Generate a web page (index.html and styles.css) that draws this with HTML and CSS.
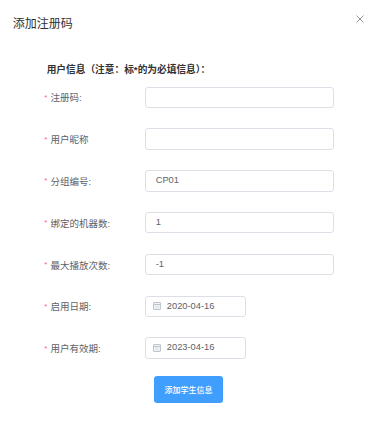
FILE: index.html
```html
<!DOCTYPE html>
<html lang="zh-CN">
<head>
<meta charset="utf-8">
<title>添加注册码</title>
<link rel="stylesheet" href="styles.css">
</head>
<body>
<div class="dialog">
  <div class="header">
    <span class="title">添加注册码</span>
    <button class="close" aria-label="关闭">
      <svg width="8" height="8" viewBox="0 0 8 8"><path d="M0.5 0.5 L7.5 7.5 M7.5 0.5 L0.5 7.5" stroke="#909399" stroke-width="1" fill="none"/></svg>
    </button>
  </div>
  <div class="form">
    <div class="section">用户信息（注意：标*的为必填信息）：</div>
    <div class="row">
      <label class="label"><span class="req">*</span>注册码:</label>
      <div class="input"></div>
    </div>
    <div class="row">
      <label class="label"><span class="req">*</span>用户昵称</label>
      <div class="input"></div>
    </div>
    <div class="row">
      <label class="label"><span class="req">*</span>分组编号:</label>
      <div class="input">CP01</div>
    </div>
    <div class="row">
      <label class="label"><span class="req">*</span>绑定的机器数:</label>
      <div class="input">1</div>
    </div>
    <div class="row">
      <label class="label"><span class="req">*</span>最大播放次数:</label>
      <div class="input">-1</div>
    </div>
    <div class="row">
      <label class="label"><span class="req">*</span>启用日期:</label>
      <div class="input date">
        <svg class="cal" width="8" height="8" viewBox="0 0 8 8"><rect x="0.5" y="0.5" width="7" height="7" rx="0.5" fill="#f2f3f5" stroke="#c0c4cc"/><path d="M0.5 2.5 H7.5" stroke="#c0c4cc"/><path d="M2 4.2 H6 M2 5.8 H6" stroke="#dcdfe6" stroke-width="0.8"/></svg>
        <span>2020-04-16</span>
      </div>
    </div>
    <div class="row">
      <label class="label"><span class="req">*</span>用户有效期:</label>
      <div class="input date">
        <svg class="cal" width="8" height="8" viewBox="0 0 8 8"><rect x="0.5" y="0.5" width="7" height="7" rx="0.5" fill="#f2f3f5" stroke="#c0c4cc"/><path d="M0.5 2.5 H7.5" stroke="#c0c4cc"/><path d="M2 4.2 H6 M2 5.8 H6" stroke="#dcdfe6" stroke-width="0.8"/></svg>
        <span>2023-04-16</span>
      </div>
    </div>
    <div class="actions">
      <button class="submit">添加学生信息</button>
    </div>
  </div>
</div>
</body>
</html>
```
FILE: styles.css
```css
html, body {
  margin: 0;
  padding: 0;
  background: #fff;
}
body {
  font-family: "Liberation Sans", "Noto Sans CJK SC", sans-serif;
  color: #606266;
  width: 378px;
  height: 422px;
  overflow: hidden;
}
.dialog {
  width: 378px;
}
.header {
  display: flex;
  justify-content: space-between;
  align-items: center;
  padding: 15.5px 14px 0 12.7px;
  height: 16px;
}
.title {
  font-size: 12px;
  line-height: 16px;
  color: #303133;
}
.close {
  border: 0;
  background: none;
  padding: 0;
  width: 8px;
  height: 8px;
  display: flex;
  margin-top: -9.5px;
}
.form {
  padding: 31.8px 0 0 44.3px;
}
.section {
  font-size: 9.7px;
  font-weight: bold;
  color: #303133;
  line-height: 14px;
  margin-left: 2.4px;
  margin-bottom: 9.4px;
}
.row {
  display: flex;
  align-items: center;
  height: 21.3px;
  margin-bottom: 20.5px;
}
.label {
  width: 101px;
  font-size: 9.5px;
  color: #606266;
  display: flex;
  align-items: center;
}
.req {
  color: #f56c6c;
  margin-right: 3px;
  font-size: 8px;
}
.input {
  box-sizing: border-box;
  width: 188.4px;
  height: 21.3px;
  border: 1px solid #dcdfe6;
  border-radius: 3px;
  padding: 0 9.4px;
  font-size: 9.3px;
  line-height: 19.3px;
  color: #606266;
}
.date {
  width: 100.4px;
  display: flex;
  align-items: center;
  padding-left: 7px;
}
.cal {
  margin-right: 5.5px;
  flex: none;
}
.actions {
  display: flex;
  padding-left: 110px;
  margin-top: -3.5px;
}
.submit {
  width: 68.4px;
  height: 27px;
  border: 0;
  border-radius: 3px;
  background: #409eff;
  color: #fff;
  font-family: "Noto Sans CJK SC", sans-serif;
  font-size: 8px;
  font-weight: 500;
  padding: 0;
}
```
